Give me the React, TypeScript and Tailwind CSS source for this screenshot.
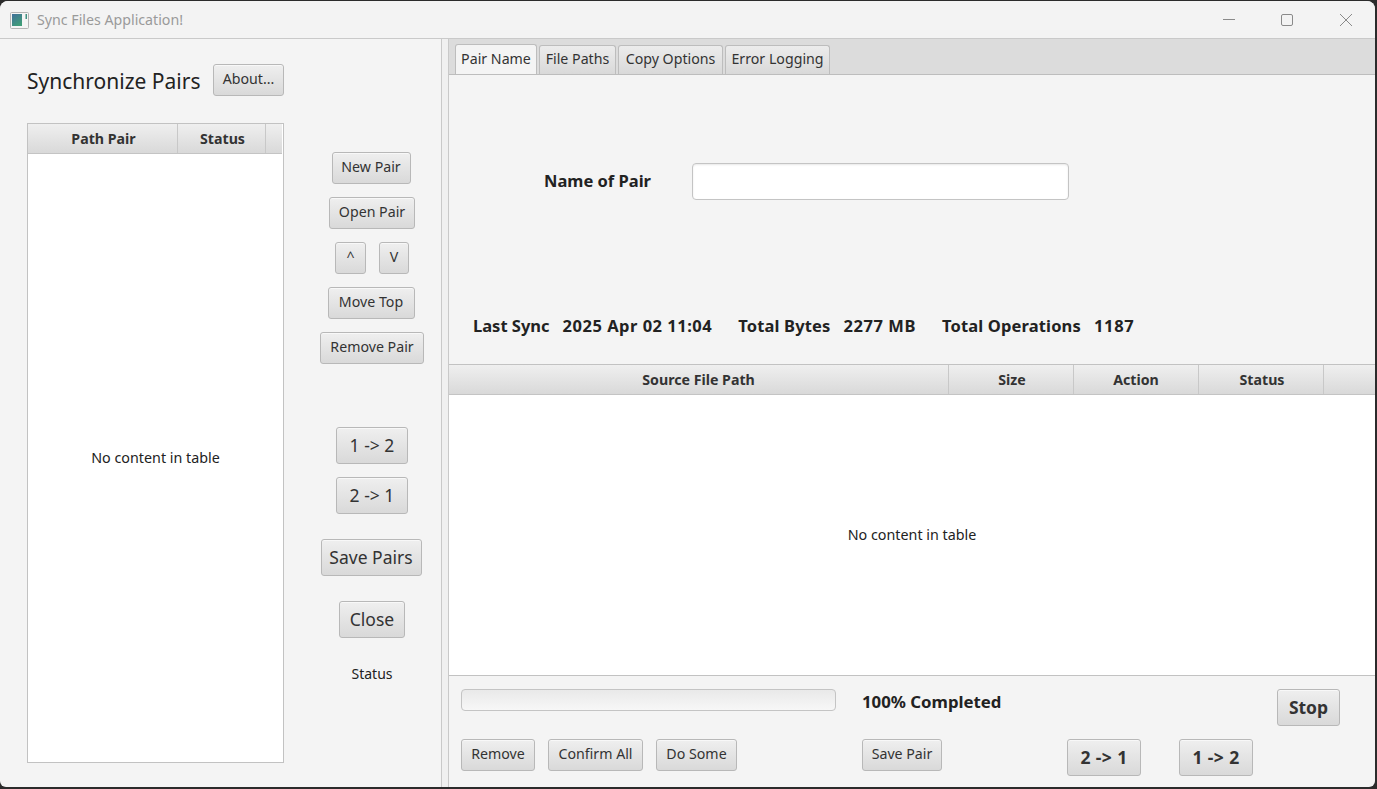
const font = "font-['Noto_Sans','Open_Sans',sans-serif]";

function Btn({ label, sm, className = '' }: { label: string; sm?: boolean; className?: string }) {
  return (
    <button className={`flex items-center justify-center shrink-0 rounded-[3px] border border-[#b8b8b8] bg-gradient-to-b from-[#efefef] to-[#d9d9d9] text-[#333] shadow-[inset_0_1px_0_#f8f8f8] ${sm ? 'h-[32px] pb-[2px] text-[14.2px]' : 'h-[37px]'} ${className}`}>
      {label}
    </button>
  );
}

function HeaderCell({ label, className = '' }: { label: string; className?: string }) {
  return (
    <div className={`flex items-center justify-center h-full border-r border-[#c8c8c8] text-[14.2px] font-bold text-[#333] ${className}`}>
      {label}
    </div>
  );
}

function Tab({ label, active, className = '' }: { label: string; active?: boolean; className?: string }) {
  return (
    <div className={`flex items-center justify-center rounded-t-[3px] border border-b-0 border-[#bdbdbd] text-[14.2px] text-[#333] ${active ? 'h-[30px] bg-[#f4f4f4] pb-[2px]' : 'h-[29px] pb-[3px] bg-gradient-to-b from-[#ececec] to-[#d9d9d9]'} ${className}`}>
      {label}
    </div>
  );
}

export default function App() {
  return (
    <div className={`${font} h-[789px] w-[1377px] overflow-hidden bg-[#2b2b2b] pt-px pr-[2px] pb-[2px]`}>
      <div className="flex h-full flex-col overflow-hidden rounded-t-lg rounded-b-md bg-[#f4f4f4]">
        {/* Title bar */}
        <div className="flex h-[38px] shrink-0 items-center border-b border-[#c9c9c9] bg-[#f3f3f3]">
          <svg width="19" height="17" viewBox="0 0 19 17" className="ml-[10px] mt-[1px]">
            <defs>
              <linearGradient id="ic" x1="0" y1="0" x2="0.6" y2="1">
                <stop offset="0" stopColor="#3f6f9a" />
                <stop offset="1" stopColor="#3f9c78" />
              </linearGradient>
            </defs>
            <rect x="0.5" y="0.5" width="18" height="16" rx="1" fill="#f4f4f4" stroke="#b4b4b4" />
            <rect x="2" y="2" width="10" height="12" fill="url(#ic)" />
            <rect x="15.5" y="2" width="1.5" height="5" fill="#3f8f80" />
          </svg>
          <span className="ml-[8px] text-[14.2px] text-[#9a9a9a]">Sync Files Application!</span>
          <div className="ml-auto mr-[23px] flex items-center gap-[47px]">
            <svg width="12" height="12" viewBox="0 0 12 12" className="-mr-px"><path d="M0 5.5h12" stroke="#8a8a8a" strokeWidth="1" /></svg>
            <svg width="12" height="12" viewBox="0 0 12 12"><rect x="0.5" y="0.5" width="11" height="11" rx="1.5" fill="none" stroke="#8a8a8a" /></svg>
            <svg width="12" height="12" viewBox="0 0 12 12"><path d="M0 0l12 12M12 0L0 12" stroke="#8a8a8a" strokeWidth="1" /></svg>
          </div>
        </div>

        <div className="flex min-h-0 flex-1">
          {/* Left pane */}
          <div className="flex w-[441px] shrink-0 pl-[27px]">
            <div className="flex w-[257px] shrink-0 flex-col pb-[24px]">
              <div className="flex h-[84px] shrink-0 items-center pb-[2px]">
                <span className="mt-[3px] text-[21px] text-[#222]">Synchronize Pairs</span>
                <Btn sm label="About..." className="ml-auto w-[71px]" />
              </div>
              <div className="flex min-h-0 flex-1 flex-col border border-[#c2c2c2] bg-white">
                <div className="flex h-[30px] shrink-0 items-stretch border-b border-[#c4c4c4] bg-gradient-to-b from-[#efefef] to-[#d9d9d9] mr-[1px]">
                  <HeaderCell label="Path Pair" className="w-[150px] pl-[2px]" />
                  <HeaderCell label="Status" className="w-[88px] pl-[2px]" />
                </div>
                <div className="flex flex-1 items-center justify-center pb-px text-[14.3px] text-[#222]">No content in table</div>
              </div>
            </div>
            <div className="flex flex-1 flex-col items-center pl-[20px] pr-[1px] pt-[113px]">
              <Btn sm label="New Pair" className="mr-[2px] w-[79px]" />
              <Btn sm label="Open Pair" className="mt-[13px] w-[86px]" />
              <div className="mt-[13px] flex gap-[13px]">
                <Btn sm label="^" className="w-[31px]" />
                <Btn sm label="V" className="w-[30px]" />
              </div>
              <Btn sm label="Move Top" className="mr-[2px] mt-[13px] w-[87px]" />
              <Btn sm label="Remove Pair" className="mt-[13px] w-[104px]" />
              <Btn label="1 -> 2" className="mt-[63px] w-[72px] text-[17.5px]" />
              <Btn label="2 -> 1" className="mt-[13px] w-[72px] text-[17.5px]" />
              <Btn label="Save Pairs" className="mr-[2px] mt-[25px] w-[101px] text-[17.5px]" />
              <Btn label="Close" className="mt-[25px] w-[66px] text-[17.5px]" />
              <span className="mt-[25px] text-[14px] text-[#222]">Status</span>
            </div>
          </div>

          {/* Split divider */}
          <div className="w-[8px] shrink-0 border-x border-[#c9c9c9] bg-[#f0f0f0]" />

          {/* Right pane */}
          <div className="flex min-w-0 flex-1 flex-col">
            <div className="flex h-[36px] shrink-0 items-end gap-[2px] border-b border-[#bdbdbd] bg-[#dcdcdc] pl-[6px]">
              <Tab label="Pair Name" active className="w-[82px]" />
              <Tab label="File Paths" className="w-[77px]" />
              <Tab label="Copy Options" className="w-[105px]" />
              <Tab label="Error Logging" className="w-[105px]" />
            </div>

            <div className="flex h-[289px] shrink-0 flex-col text-[#222]">
              <div className="mt-[88px] flex items-center">
                <span className="ml-[95px] w-[148px] text-[16.5px] font-bold">Name of Pair</span>
                <input className="h-[37px] w-[377px] rounded-[4px] border border-[#c4c4c4] bg-white shadow-[inset_0_1px_2px_#e8e8e8]" />
              </div>
              <div className="mt-[114px] flex items-center whitespace-nowrap pl-[24px] text-[16.5px] font-bold">
                <span>Last Sync</span>
                <span className="ml-[13px] tracking-[0.5px]">2025 Apr 02 11:04</span>
                <span className="ml-[26px] tracking-[0.15px]">Total Bytes</span>
                <span className="ml-[13px] tracking-[0.55px]">2277 MB</span>
                <span className="ml-[26px] tracking-[0.15px]">Total Operations</span>
                <span className="ml-[13px] tracking-[0.7px]">1187</span>
              </div>
            </div>

            {/* File table */}
            <div className="flex h-[312px] shrink-0 flex-col border-y border-[#c2c2c2] bg-white">
              <div className="flex h-[30px] shrink-0 items-stretch border-b border-[#c4c4c4] bg-gradient-to-b from-[#efefef] to-[#d9d9d9]">
                <HeaderCell label="Source File Path" className="w-[500px]" />
                <HeaderCell label="Size" className="w-[125px] pl-[2px]" />
                <HeaderCell label="Action" className="w-[125px]" />
                <HeaderCell label="Status" className="w-[125px] pl-[2px]" />
              </div>
              <div className="flex flex-1 items-center justify-center pb-px text-[14.3px] text-[#222]">No content in table</div>
            </div>

            {/* Bottom controls */}
            <div className="flex min-h-0 flex-1 flex-col pl-[12px] pt-[13px]">
              <div className="flex h-[37px] shrink-0 items-start">
                <div className="h-[22px] w-[375px] rounded-[4px] border border-[#c4c4c4] bg-gradient-to-b from-[#e9e9e9] to-[#f7f7f7]" />
                <span className="ml-[26px] text-[16.8px] leading-[26px] font-bold text-[#222]">100% Completed</span>
                <Btn label="Stop" className="ml-auto mr-[35px] w-[63px] text-[17.5px] font-bold" />
              </div>
              <div className="mt-[13px] flex items-start">
                <Btn sm label="Remove" className="w-[74px]" />
                <Btn sm label="Confirm All" className="ml-[13px] w-[95px]" />
                <Btn sm label="Do Some" className="ml-[13px] w-[81px]" />
                <Btn sm label="Save Pair" className="ml-[125px] w-[80px]" />
                <Btn label="2 -> 1" className="ml-[125px] w-[74px] text-[17.5px] font-bold tracking-[0.4px]" />
                <Btn label="1 -> 2" className="ml-[38px] w-[74px] text-[17.5px] font-bold tracking-[0.4px]" />
              </div>
            </div>
          </div>
        </div>
      </div>
    </div>
  );
}
